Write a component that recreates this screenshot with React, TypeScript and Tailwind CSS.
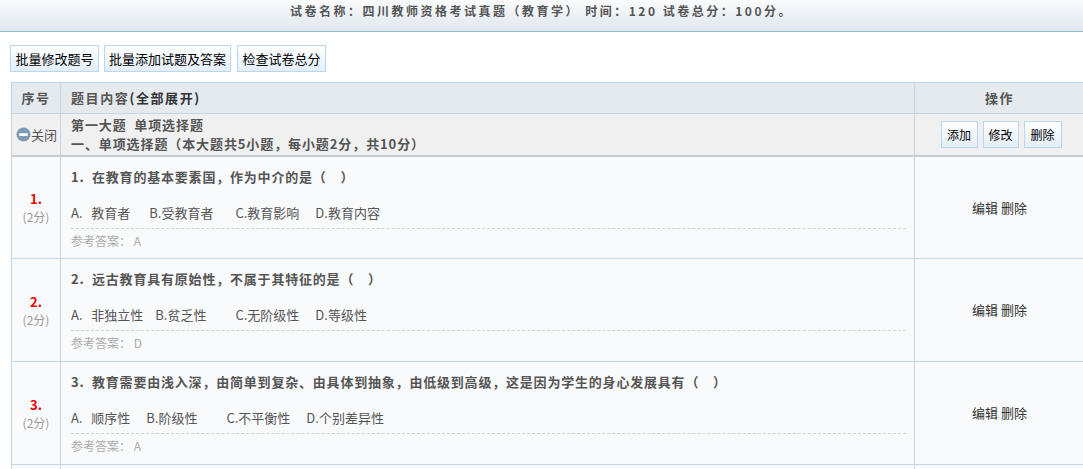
import React from "react";

type Option = { text: string; gap: string };
type Question = { no: number; title: string; options: Option[]; answer: string };

const questions: Question[] = [
  {
    no: 1,
    title: "在教育的基本要素国，作为中介的是（　）",
    options: [
      { text: "A.   教育者", gap: "" },
      { text: "B.受教育者", gap: "ml-[19px]" },
      { text: "C.教育影响", gap: "ml-[22px]" },
      { text: "D.教育内容", gap: "ml-[16px]" },
    ],
    answer: "A",
  },
  {
    no: 2,
    title: "远古教育具有原始性，不属于其特征的是（　）",
    options: [
      { text: "A.   非独立性", gap: "" },
      { text: "B.贫乏性", gap: "ml-[12px]" },
      { text: "C.无阶级性", gap: "ml-[29px]" },
      { text: "D.等级性", gap: "ml-[16px]" },
    ],
    answer: "D",
  },
  {
    no: 3,
    title: "教育需要由浅入深，由简单到复杂、由具体到抽象，由低级到高级，这是因为学生的身心发展具有（　）",
    options: [
      { text: "A.   顺序性", gap: "" },
      { text: "B.阶级性", gap: "ml-[16px]" },
      { text: "C.不平衡性", gap: "ml-[29px]" },
      { text: "D.个别差异性", gap: "ml-[16px]" },
    ],
    answer: "A",
  },
];

const font = { fontFamily: '"Noto Sans CJK SC", "Liberation Sans", sans-serif' };

function LightButton({ children, className = "" }: { children: React.ReactNode; className?: string }) {
  return (
    <button
      className={`h-[27px] border border-[#b9d8f0] bg-gradient-to-b from-white to-[#e3eef9] text-black leading-none ${className}`}
    >
      {children}
    </button>
  );
}

export default function App() {
  return (
    <div className="w-[1083px] h-[469px] overflow-hidden bg-white text-[#555]" style={font}>
      <div className="h-[32px] border-b border-[#93b6cd] bg-gradient-to-b from-[#fafbfd] to-[#dfe7ef] flex items-center justify-center">
        <span className="text-[12px] font-bold text-[#555] tracking-[2.5px] -mt-[9px]">
          试卷名称：四川教师资格考试真题（教育学） 时间：120 试卷总分：100分。
        </span>
      </div>

      <div className="flex pl-[10px] pt-[13px]">
        <LightButton className="w-[89px] text-[13px]">批量修改题号</LightButton>
        <LightButton className="ml-[5px] w-[127px] text-[13px]">批量添加试题及答案</LightButton>
        <LightButton className="ml-[6px] w-[89px] text-[13px]">检查试卷总分</LightButton>
      </div>

      <table className="ml-[11px] mt-[10px] w-[1073px] border-collapse table-fixed">
        <colgroup>
          <col className="w-[49px]" />
          <col className="w-[854px]" />
          <col className="w-[170px]" />
        </colgroup>
        <thead>
          <tr className="h-[31px] bg-[#e5eaee] text-[13px] font-bold text-[#555]">
            <th className="border border-[#c3d6e5] text-center font-bold tracking-[1.5px]">序号</th>
            <th className="border border-[#c3d6e5] text-left pl-[10px] font-bold tracking-[1.6px]">
              题目内容<span className="text-[#333]">(全部展开)</span>
            </th>
            <th className="border border-[#c3d6e5] text-center font-bold tracking-[1.5px]">操作</th>
          </tr>
        </thead>
        <tbody>
          <tr className="h-[42px] bg-[#f0f0f0] border-b-2 border-b-[#c9ccce]">
            <td className="border-x border-[#c3d6e5] text-[13px] text-[#555]">
              <div className="flex items-center pl-[4px]">
                <svg width="15" height="15" viewBox="0 0 15 15">
                  <circle cx="7.5" cy="7.5" r="7" fill="#7f9cb4" />
                  <rect x="3.2" y="6.2" width="8.6" height="2.8" rx="0.8" fill="#fff" />
                </svg>
                <span>关闭</span>
              </div>
            </td>
            <td className="border-x border-[#c3d6e5] pl-[10px] text-[13px] font-bold text-[#555] leading-[19px] tracking-[0.9px]">
              <div>第一大题&nbsp;&nbsp;单项选择题</div>
              <div>一、单项选择题（本大题共5小题，每小题2分，共10分）</div>
            </td>
            <td className="border-x border-[#c3d6e5]">
              <div className="flex justify-center pl-[3px] pt-[1px]">
                <LightButton className="w-[37px] text-[12px]">添加</LightButton>
                <LightButton className="ml-[5px] w-[36px] text-[12px]">修改</LightButton>
                <LightButton className="ml-[5px] w-[38px] text-[12px]">删除</LightButton>
              </div>
            </td>
          </tr>
          {questions.map((q) => (
            <tr key={q.no} className="h-[103px] bg-[#f9fafc]">
              <td className="border border-[#c3d6e5] text-center align-middle">
                <div className="text-[13px] font-bold text-[#ee0000] leading-[16px] pt-[4px]">{q.no}.</div>
                <div className="text-[12px] text-[#999] leading-[20px]">(2分)</div>
              </td>
              <td className="border border-[#c3d6e5] align-top pl-[10px] pr-[8px]">
                <div className="pt-[11px] text-[13px] font-bold text-[#555] leading-[18px] whitespace-pre tracking-[0.8px]">
                  {q.no}.  {q.title}
                </div>
                <div className="mt-[18px] text-[13px] text-[#555] leading-[18px] whitespace-pre">
                  {q.options.map((o, i) => (
                    <span key={i} className={`inline-block ${o.gap}`}>
                      {o.text}
                    </span>
                  ))}
                </div>
                <div className="mt-[6px] border-t border-dashed border-[#cfd3d6]" />
                <div className="pt-[3px] text-[12px] text-[#aaa] leading-[18px]">参考答案： {q.answer}</div>
              </td>
              <td className="border border-[#c3d6e5] text-center text-[13px] text-[#333]">
                编辑 删除
              </td>
            </tr>
          ))}
          <tr className="h-[30px] bg-[#f9fafc]">
            <td className="border border-[#c3d6e5]" />
            <td className="border border-[#c3d6e5]" />
            <td className="border border-[#c3d6e5]" />
          </tr>
        </tbody>
      </table>
    </div>
  );
}
